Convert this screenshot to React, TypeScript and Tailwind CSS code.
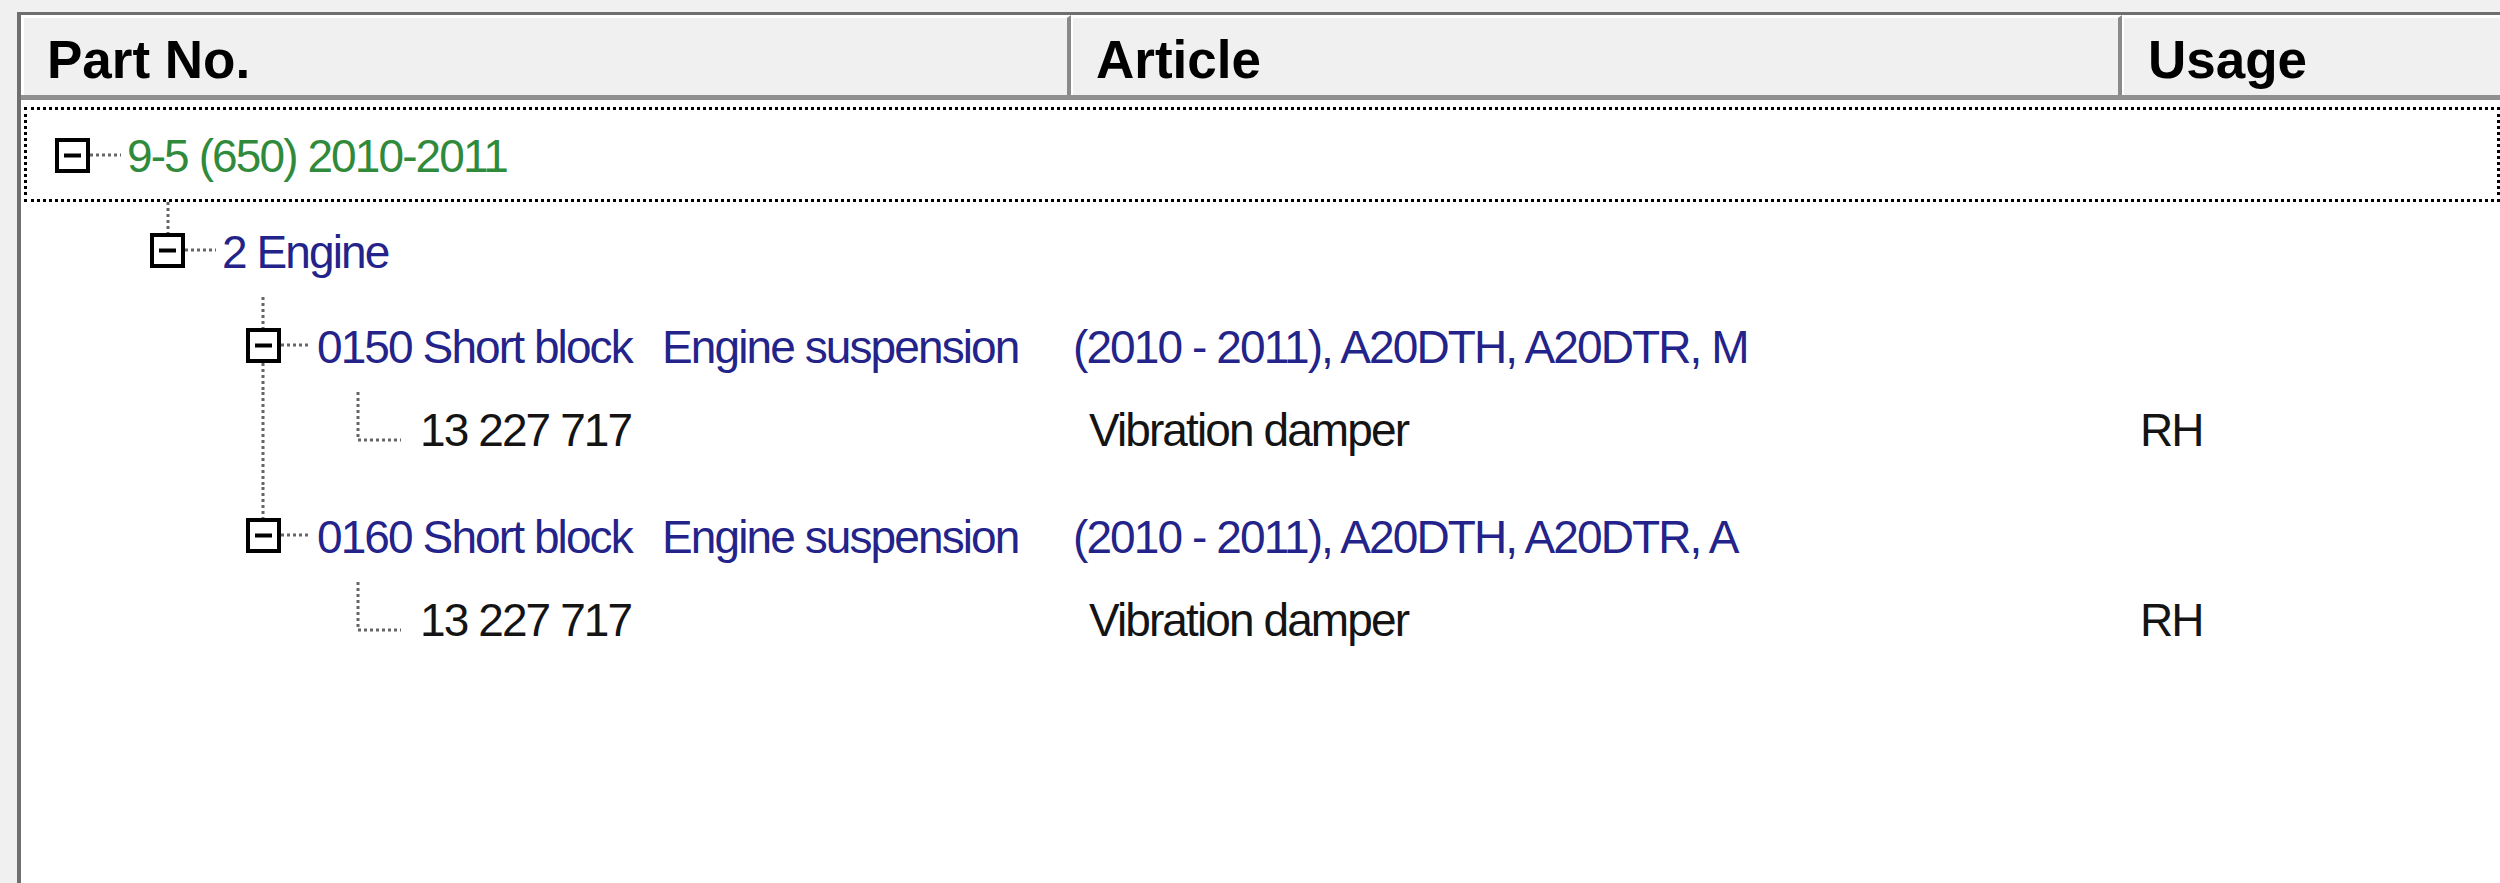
import type { ReactNode } from 'react';

type Seg = [number, number, number, number];

interface TreeRowProps {
  gutter: number;
  box?: number;
  lines: Seg[];
  focused?: boolean;
  children: ReactNode;
}

function TreeRow({ gutter, box, lines, focused, children }: TreeRowProps) {
  return (
    <div className="relative flex h-[95px] items-center">
      <svg width={gutter} height={95} className="shrink-0">
        {lines.map(([x1, y1, x2, y2], i) => (
          <line
            key={i}
            x1={x1}
            y1={y1}
            x2={x2}
            y2={y2}
            stroke="#666"
            strokeWidth={3}
            strokeDasharray="3 3"
          />
        ))}
        {box !== undefined && (
          <g>
            <rect x={box + 2} y={33} width={31} height={31} fill="#fff" stroke="#000" strokeWidth={4} />
            <line x1={box + 9} y1={48.5} x2={box + 26} y2={48.5} stroke="#000" strokeWidth={4} />
          </g>
        )}
      </svg>
      {children}
      {focused && (
        <div className="pointer-events-none absolute inset-y-0 left-[3px] right-0 border-[3px] border-dotted border-black" />
      )}
    </div>
  );
}

const body = "whitespace-nowrap text-[46px] leading-none tracking-[-1.9px]";

function NodeText({ parts }: { parts: string[] }) {
  return (
    <div className={`flex pt-[4px] text-[#23238a] ${body}`}>
      <span className="w-[345px] shrink-0">{parts[0]}</span>
      <span className="w-[409px] shrink-0">{parts[1]}</span>
      <span className="pl-[2px]">{parts[2]}</span>
    </div>
  );
}

function PartText({ no, article, usage }: { no: string; article: string; usage: string }) {
  return (
    <div className={`flex pb-5 text-[#141414] ${body}`}>
      <span className="w-[652px] shrink-0">{no}</span>
      <span className="w-[1053px] shrink-0 pl-[17px]">{article}</span>
      <span className="pl-[15px]">{usage}</span>
    </div>
  );
}

export default function App() {
  return (
    <div className="h-[883px] w-full overflow-hidden bg-[#f0f0f0] pl-[17px] pt-[12px] font-['Liberation_Sans',Arial,sans-serif]">
      <div className="flex h-full flex-col border-l-[4px] border-t-[3px] border-[#6f6f6f] bg-white">
        <div className="flex h-[85px] shrink-0 border-b-[5px] border-[#8f8f8f] bg-[#f0f0f0] text-[53px] font-bold leading-none text-black">
          <div className="flex w-[1050px] shrink-0 items-center border-r-[4px] border-l-[3px] border-t-[3px] border-[#8a8a8a] border-l-white border-t-white pl-[23px] pt-[5px]">
            Part No.
          </div>
          <div className="flex w-[1051px] shrink-0 items-center border-r-[4px] border-l-[2px] border-t-[3px] border-[#8a8a8a] border-l-white border-t-white pl-[23px] pt-[5px]">
            Article
          </div>
          <div className="flex flex-1 items-center border-l-[2px] border-t-[3px] border-white pl-[24px] pt-[5px]">
            Usage
          </div>
        </div>

        <div className="pt-[7px]">
          <TreeRow gutter={106} box={34} lines={[[69, 48, 100, 48]]} focused>
            <span className={`pt-[3px] text-[#2f8a3c] ${body}`}>9-5 (650) 2010-2011</span>
          </TreeRow>
          <TreeRow gutter={201} box={129} lines={[[147, 0, 147, 31], [164, 48, 195, 48]]}>
            <span className={`pt-[4px] text-[#23238a] ${body}`}>2 Engine</span>
          </TreeRow>
          <TreeRow gutter={296} box={225} lines={[[242, 0, 242, 31], [242, 66, 242, 95], [260, 48, 290, 48]]}>
            <NodeText parts={['0150 Short block', 'Engine suspension', '(2010 - 2011), A20DTH, A20DTR, M']} />
          </TreeRow>
          <TreeRow gutter={399} lines={[[242, 0, 242, 95], [337, 0, 337, 48], [337, 48, 380, 48]]}>
            <PartText no="13 227 717" article="Vibration damper" usage="RH" />
          </TreeRow>
          <TreeRow gutter={296} box={225} lines={[[242, 0, 242, 31], [260, 48, 290, 48]]}>
            <NodeText parts={['0160 Short block', 'Engine suspension', '(2010 - 2011), A20DTH, A20DTR, A']} />
          </TreeRow>
          <TreeRow gutter={399} lines={[[337, 0, 337, 48], [337, 48, 380, 48]]}>
            <PartText no="13 227 717" article="Vibration damper" usage="RH" />
          </TreeRow>
        </div>
      </div>
    </div>
  );
}
